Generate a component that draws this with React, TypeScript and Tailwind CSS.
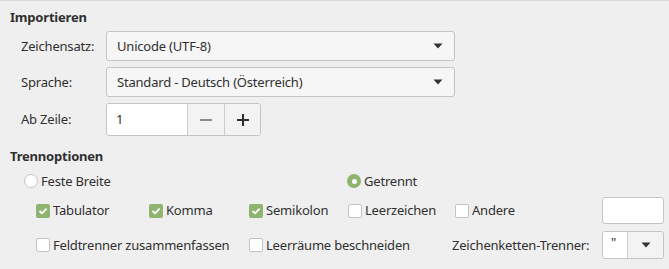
import React from "react";

const TEXT = "text-[#303030]";

function Arrow() {
  return (
    <svg width="10" height="6" viewBox="0 0 10 6" className="block">
      <path d="M0.5 0.5 H9.5 L5 5.5 Z" fill="#333333" />
    </svg>
  );
}

function Check({ checked, label }: { checked?: boolean; label: string }) {
  return (
    <div className="flex items-center">
      {checked ? (
        <div className="w-[14px] h-[14px] rounded-[2px] bg-[#8fb46f] flex items-center justify-center">
          <svg width="10" height="8" viewBox="0 0 10 8">
            <path d="M1.5 4 L4 6.3 L8.6 1.6" stroke="#ffffff" strokeWidth="1.8" fill="none" />
          </svg>
        </div>
      ) : (
        <div className="w-[14px] h-[14px] rounded-[2px] bg-white border border-[#c4c4c4]" />
      )}
      <span className={`ml-[3px] ${TEXT}`}>{label}</span>
    </div>
  );
}

function Radio({ checked, label }: { checked?: boolean; label: string }) {
  return (
    <div className="flex items-center">
      {checked ? (
        <div className="w-[14px] h-[14px] rounded-full bg-[#8fb46f] flex items-center justify-center">
          <div className="w-[5px] h-[5px] rounded-full bg-white" />
        </div>
      ) : (
        <div className="w-[14px] h-[14px] rounded-full bg-white border border-[#c4c4c4]" />
      )}
      <span className={`ml-[3px] ${TEXT}`}>{label}</span>
    </div>
  );
}

function Combo({ value }: { value: string }) {
  return (
    <div className="w-[349px] h-[30px] bg-[#f6f6f6] border border-[#c4c4c4] rounded-[3px] flex items-center pl-[10px] pr-[11px]">
      <span className={`flex-1 ${TEXT}`}>{value}</span>
      <Arrow />
    </div>
  );
}

export default function App() {
  return (
    <div
      className="w-[669px] h-[269px] bg-[#efefef] border-t border-[#d8d8d8] overflow-hidden text-[13px] leading-[17px] tracking-[-0.2px]"
      style={{ fontFamily: '"Noto Sans", "Open Sans", sans-serif' }}
    >
      <div className="pt-[8px]">
        <div className={`pl-[10px] h-[17px] font-bold ${TEXT}`}>Importieren</div>

        <div className="mt-[5px] flex flex-col gap-[6px]">
          <div className="flex items-center">
            <span className={`w-[106px] pl-[21px] ${TEXT}`}>Zeichensatz:</span>
            <Combo value="Unicode (UTF-8)" />
          </div>
          <div className="flex items-center">
            <span className={`w-[106px] pl-[21px] ${TEXT}`}>Sprache:</span>
            <Combo value="Standard - Deutsch (Österreich)" />
          </div>
          <div className="flex items-center">
            <span className={`w-[106px] pl-[21px] ${TEXT}`}>Ab Zeile:</span>
            <div className="h-[33px] flex border border-[#c4c4c4] rounded-[3px] overflow-hidden">
              <div className={`w-[80px] bg-white flex items-center pl-[9px] ${TEXT}`}>1</div>
              <div className="w-[37px] bg-[#f3f3f3] border-l border-[#cdcdcd] flex items-center justify-center">
                <div className="w-[12px] h-[2px] bg-[#8c8c8c]" />
              </div>
              <div className="w-[36px] bg-[#f3f3f3] border-l border-[#cdcdcd] flex items-center justify-center relative">
                <div className="w-[12px] h-[2px] bg-[#2d2d2d]" />
                <div className="absolute w-[2px] h-[12px] bg-[#2d2d2d]" />
              </div>
            </div>
          </div>
        </div>

        <div className={`mt-[12px] pl-[10px] h-[17px] font-bold ${TEXT}`}>Trennoptionen</div>

        <div className="mt-[6px] h-[20px] flex items-center pl-[24px]">
          <div className="w-[323px]">
            <Radio label="Feste Breite" />
          </div>
          <Radio checked label="Getrennt" />
        </div>

        <div className="mt-[6px] h-[27px] flex items-center pl-[36px]">
          <div className="w-[113px]"><Check checked label="Tabulator" /></div>
          <div className="w-[100px]"><Check checked label="Komma" /></div>
          <div className="w-[99px]"><Check checked label="Semikolon" /></div>
          <div className="w-[107px]"><Check label="Leerzeichen" /></div>
          <div className="w-[147px]"><Check label="Andere" /></div>
          <div className="w-[62px] h-[27px] bg-white border border-[#c4c4c4] rounded-[3px]" />
        </div>

        <div className="mt-[7px] h-[28px] flex items-center pl-[36px]">
          <div className="w-[213px]"><Check label="Feldtrenner zusammenfassen" /></div>
          <div className="w-[203px]"><Check label="Leerräume beschneiden" /></div>
          <div className={`w-[150px] ${TEXT}`}>Zeichenketten-Trenner:</div>
          <div className="w-[62px] h-[28px] flex border border-[#c4c4c4] rounded-[3px] overflow-hidden">
            <div className={`w-[24px] bg-white pl-[8px] pt-[2px] ${TEXT}`}>"</div>
            <div className="flex-1 bg-[#f3f3f3] border-l border-[#cdcdcd] flex items-center justify-center">
              <Arrow />
            </div>
          </div>
        </div>
      </div>
    </div>
  );
}
